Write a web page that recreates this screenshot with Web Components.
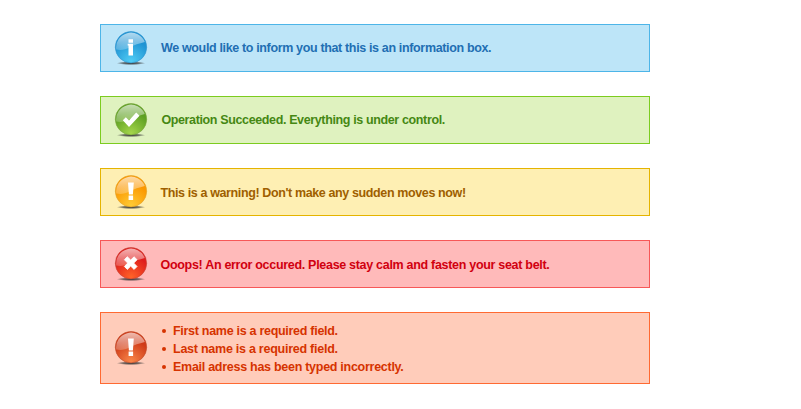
<!DOCTYPE html>
<html lang="en"><head><meta charset="utf-8"><title>Message boxes</title>
<style>body{margin:0;background:#fff}</style></head><body>
<message-stack>
<message-box kind="info"><message-text style="--track:-.35px">We would like to inform you that this is an information box.</message-text></message-box>
<message-box kind="success"><message-text style="--track:-.367px;--nudge:.4px">Operation Succeeded. Everything is under control.</message-text></message-box>
<message-box kind="warning"><message-text style="--track:-.38px;--drop:2px;--nudge:-.5px">This is a warning! Don't make any sudden moves now!</message-text></message-box>
<message-box kind="error"><message-text style="--track:-.3px;--drop:2px;--nudge:-.5px">Ooops! An error occured. Please stay calm and fasten your seat belt.</message-text></message-box>
<message-box kind="validation">
<message-text bullet style="--track:-.287px">First name is a required field.</message-text>
<message-text bullet style="--track:-.25px">Last name is a required field.</message-text>
<message-text bullet style="--track:-.275px">Email adress has been typed incorrectly.</message-text>
</message-box>
</message-stack>
<script>
class MessageStack extends HTMLElement{
 constructor(){super();this.attachShadow({mode:'open'}).innerHTML=`<style>:host{display:flex;flex-direction:column;gap:24px;width:550px;padding:24px 0 0 100px}</style><slot></slot>`}
}
class MessageText extends HTMLElement{
 constructor(){super();this.attachShadow({mode:'open'}).innerHTML=`<style>
 :host{display:flex;align-items:center;height:18px;padding-top:var(--drop,0);margin-left:var(--nudge,0);white-space:nowrap;font:bold 12.5px/18px "Liberation Sans",Arial,sans-serif;letter-spacing:var(--track,0)}
 i{display:none;flex:none;width:4px;height:4px;border-radius:50%;background:currentColor;margin:0 7px 0 1px}
 :host([bullet]) i{display:block}
 </style><i></i><span><slot></slot></span>`}
}
const glyphs={
 info:'<path d="M14.5 8.3h4.5v3.5h-4.5zM13.7 12.8h5.3v11.7h-4.5v-9.9h-.8z"/>',
 success:'<path d="M8.8 17.2 11.8 14.2 15 17.4 22.2 9.6 25.5 12.8 15 24z"/>',
 warning:'<path d="M14 7.5h5.8l-.9 12h-4zM14.6 20.4h4.5v4.5h-4.5z"/>',
 error:'<path d="m10.4 12.7 2.9-2.9 3.4 3.3 3.4-3.3 2.9 2.9-3.3 3.4 3.3 3.4-2.9 2.9-3.4-3.3-3.4 3.3-2.9-2.9 3.3-3.4z" stroke="#fff" stroke-width=".9"/>'
};
glyphs.validation=glyphs.warning;
const palette={
 info:['#bde5f8','#4db5e8','#226fb3','#2f93cf','#1f93d3','#51cdf5'],
 success:['#dff2bf','#7ccc1f','#458813','#79a53c','#5d9f22','#a5d64b'],
 warning:['#feefb3','#e5b400','#9f5f00','#dfa22c','#fb9700','#ffcb35'],
 error:['#ffbaba','#f75858','#d1000f','#c44535','#df1c1c','#ff6428'],
 validation:['#ffccba','#ff6a32','#d63300','#bd4c2b','#cf3a17','#f98749']
};
class StatusOrb extends HTMLElement{
 connectedCallback(){const k=this.getAttribute('kind'),p=palette[k];
 this.attachShadow({mode:'open'}).innerHTML=`<style>:host{display:block;flex:none;width:34px;height:34px}svg{display:block}</style>
 <svg width="34" height="34" viewBox="0 0 34 34"><defs>
 <radialGradient id="shadow"><stop stop-color="#222" stop-opacity=".9"/><stop offset=".55" stop-color="#333" stop-opacity=".65"/><stop offset="1" stop-color="#333" stop-opacity="0"/></radialGradient>
 <radialGradient id="ball" cx=".5" cy=".95" r=".75"><stop stop-color="${p[5]}"/><stop offset=".9" stop-color="${p[4]}"/></radialGradient>
 <linearGradient id="gloss" x2="0" y2="1"><stop stop-color="#fff" stop-opacity=".65"/><stop offset="1" stop-color="#fff" stop-opacity=".22"/></linearGradient></defs>
 <ellipse cx="17" cy="32.2" rx="14.5" ry="1.8" fill="url(#shadow)"/>
 <circle cx="17" cy="16.2" r="15.7" fill="url(#ball)" stroke="${p[3]}" stroke-width=".6"/>
 <path d="M2.2 18.5A14.9 14.9 0 0 1 30.8 11C25 12.5 20 14 16 16.2C11 18.8 7 19.5 2.2 18.5Z" fill="url(#gloss)"/>
 <g fill="#fff">${glyphs[k]}</g></svg>`}
}
class MessageBox extends HTMLElement{
 connectedCallback(){const k=this.getAttribute('kind'),p=palette[k];
 this.attachShadow({mode:'open'}).innerHTML=`<style>
 :host{display:flex;align-items:center;box-sizing:border-box;min-height:48px;padding:8px 12px 8px 13px;gap:13px;border:1px solid ${p[1]};background:${p[0]};color:${p[2]}}
 :host([kind=validation]){height:72px}
 :host([kind=validation]) div{padding-top:1px;margin-bottom:-1px}
 status-orb{margin:-2px 0}
 </style><status-orb kind="${k}"></status-orb><div><slot></slot></div>`}
}
customElements.define('message-stack',MessageStack);customElements.define('message-text',MessageText);customElements.define('status-orb',StatusOrb);customElements.define('message-box',MessageBox);
</script></body></html>
